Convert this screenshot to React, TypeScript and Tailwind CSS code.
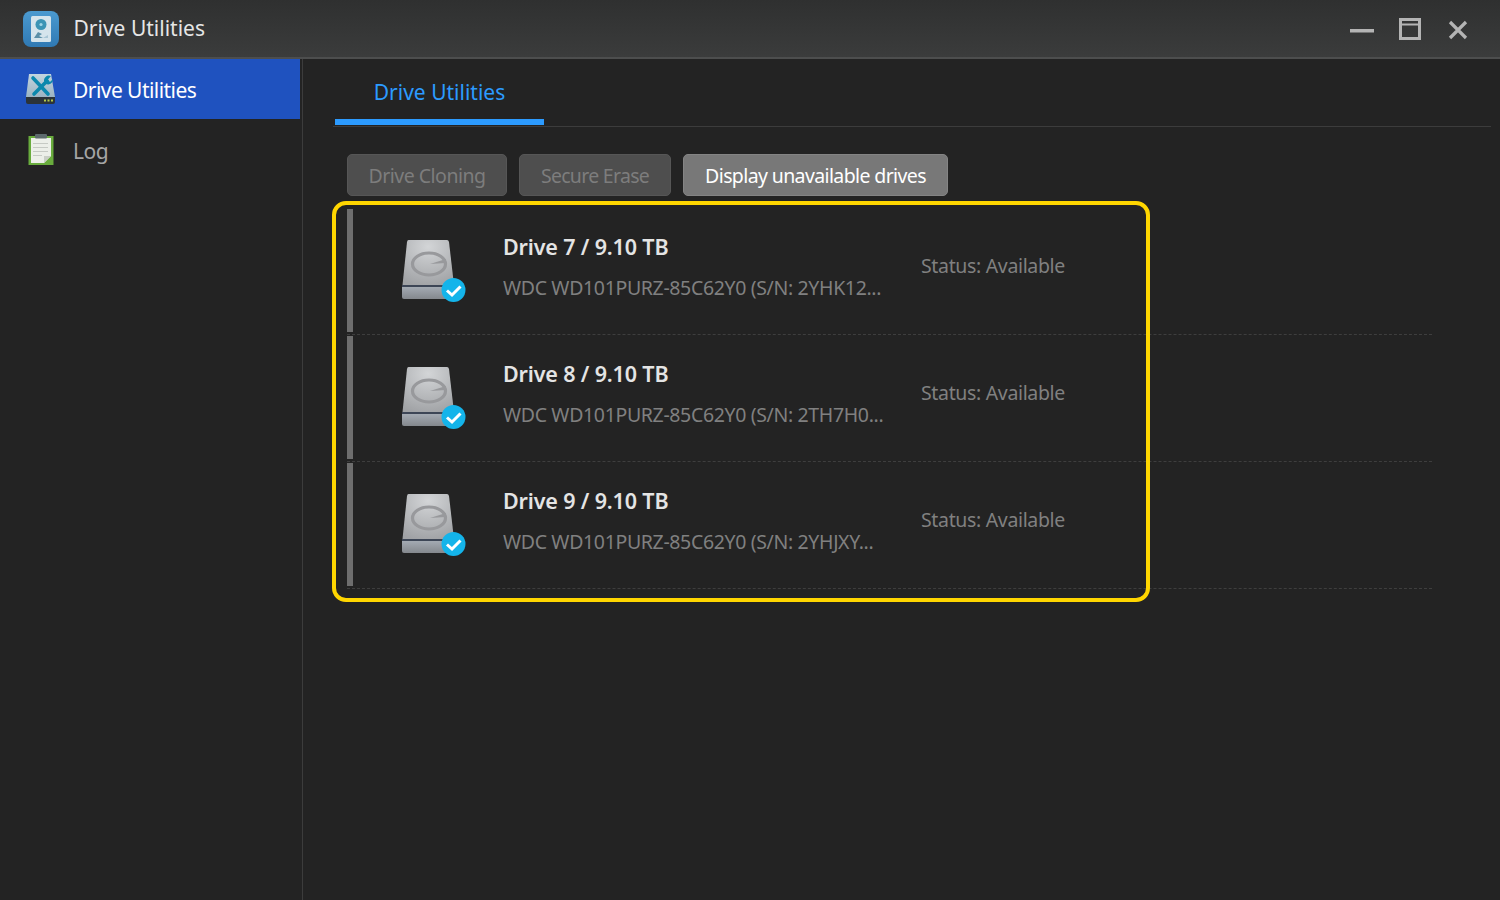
import React from 'react';

const drives = [
  { name: 'Drive 7 / 9.10 TB', model: 'WDC WD101PURZ-85C62Y0 (S/N: 2YHK12...' },
  { name: 'Drive 8 / 9.10 TB', model: 'WDC WD101PURZ-85C62Y0 (S/N: 2TH7H0...' },
  { name: 'Drive 9 / 9.10 TB', model: 'WDC WD101PURZ-85C62Y0 (S/N: 2YHJXY...' },
];

function AppLogo() {
  return (
    <svg width="36" height="36" viewBox="0 0 36 36" className="shrink-0">
      <defs>
        <linearGradient id="logoBg" x1="0" y1="0" x2="0" y2="1">
          <stop offset="0" stopColor="#4b9ad0" />
          <stop offset="1" stopColor="#2f79b4" />
        </linearGradient>
      </defs>
      <rect x="0" y="0" width="36" height="36" rx="8" fill="url(#logoBg)" />
      <rect x="8" y="5" width="20" height="26" rx="1.5" fill="#d5e4ec" />
      <circle cx="18" cy="13.5" r="5.5" fill="#3b94b5" />
      <circle cx="18" cy="13.5" r="1.6" fill="#9fd4e6" />
      <path d="M11 27 L15 21 L19 23 L16 25 L20 27 Z" fill="#5b8fa8" />
      <path d="M20 27 L25 24 L25 27 Z" fill="#a9c6d6" />
    </svg>
  );
}

function ToolsDriveIcon() {
  return (
    <svg width="32" height="32" viewBox="0 0 32 32" className="shrink-0">
      <defs>
        <linearGradient id="toolBg" x1="0" y1="0" x2="0" y2="1">
          <stop offset="0" stopColor="#c3d5df" />
          <stop offset="1" stopColor="#9bb4c2" />
        </linearGradient>
      </defs>
      <path d="M4 1 H26 L30 24 H1 Z" fill="url(#toolBg)" />
      <path d="M1 24 H30 V29 Q30 31 28 31 H3 Q1 31 1 29 Z" fill="#2b3338" />
      <rect x="19" y="26.5" width="2" height="2" fill="#b4c94a" />
      <rect x="22.5" y="26.5" width="2" height="2" fill="#b4c94a" />
      <rect x="26" y="26.5" width="2" height="2" fill="#b4c94a" />
      <path d="M8 5 L23 21" stroke="#0b88ad" strokeWidth="3.6" strokeLinecap="round" />
      <path d="M22 8 L9 21" stroke="#0b88ad" strokeWidth="3.6" strokeLinecap="round" />
      <path d="M19 8 A5 5 0 0 1 26 3 L23 6.5 L25 9 L28 6 A5 5 0 0 1 21 11 Z" fill="#0b88ad" />
    </svg>
  );
}

function LogIcon() {
  return (
    <svg width="26" height="31" viewBox="0 0 26 31" className="shrink-0">
      <rect x="0.5" y="2" width="25" height="29" fill="#69ac3d" />
      <rect x="3" y="4" width="20" height="25" fill="#ecefe9" />
      <path d="M23 22 L16 29 H23 Z" fill="#69ac3d" />
      <path d="M16 22 H23 L16 29 Z" fill="#c9cec6" />
      <rect x="7" y="0" width="12" height="4.5" rx="1" fill="#5d6a6d" />
      <rect x="5" y="9" width="15" height="1" fill="#c6cac4" />
      <rect x="5" y="13" width="15" height="1" fill="#c6cac4" />
      <rect x="5" y="17" width="15" height="1" fill="#c6cac4" />
      <rect x="5" y="21" width="9" height="1" fill="#c6cac4" />
    </svg>
  );
}

function DriveIcon({ id }: { id: number }) {
  return (
    <svg width="66" height="66" viewBox="0 0 66 66" className="shrink-0">
      <defs>
        <radialGradient id={`hd${id}`} cx="0.5" cy="0.15" r="0.9">
          <stop offset="0" stopColor="#d3d5d7" />
          <stop offset="1" stopColor="#a0a2a5" />
        </radialGradient>
        <linearGradient id={`hdb${id}`} x1="0" y1="0" x2="0" y2="1">
          <stop offset="0" stopColor="#a9b0b9" />
          <stop offset="1" stopColor="#84888d" />
        </linearGradient>
      </defs>
      <path d="M7.5 2 H46 Q47.5 2 48 4 L53 47 H1.5 L6 4 Q6.3 2 7.5 2 Z" fill={`url(#hd${id})`} />
      <path d="M1 47 H53 V59 Q53 61 51 61 H3 Q1 61 1 59 Z" fill={`url(#hdb${id})`} />
      <rect x="1" y="47" width="52" height="2" fill="#3d4656" />
      <ellipse cx="28" cy="26" rx="16.5" ry="11" fill="none" stroke="#98999c" strokeWidth="3.2" />
      <path d="M29 26 L45 21 L45 25 Z" fill="#98999c" />
      <circle cx="52.5" cy="52" r="12" fill="#14b4ea" />
      <path d="M46 52.5 L51 57 L59.5 48.5" fill="none" stroke="#ffffff" strokeWidth="3" />
    </svg>
  );
}

export default function App() {
  return (
    <div className="relative flex h-[900px] w-[1500px] flex-col overflow-hidden bg-[#232323] font-['Noto_Sans','Open_Sans',sans-serif]">
      <header className="flex h-[59px] shrink-0 items-center border-b-2 border-[#4d4e4e] bg-gradient-to-b from-[#2f3030] to-[#3b3c3c] pl-[23px] pr-[32px]">
        <AppLogo />
        <span className="ml-[14.5px] text-[21px] text-[#e6e6e6]">Drive Utilities</span>
        <div className="ml-auto flex items-center">
          <svg width="24" height="24" viewBox="0 0 24 24" className="mt-[4px]"><rect y="10" width="24" height="3.5" fill="#b4b4b4" /></svg>
          <svg width="22" height="22" viewBox="0 0 22 22" className="ml-[25px]"><path d="M1.5 1.5 H20.5 V20.5 H1.5 Z" fill="none" stroke="#b4b4b4" strokeWidth="3" /><rect x="3" y="5.5" width="16" height="2" fill="#b4b4b4" /></svg>
          <svg width="20" height="20" viewBox="0 0 20 20" className="ml-[27px] mt-[3px]"><path d="M2 2 L18 18 M18 2 L2 18" stroke="#b4b4b4" strokeWidth="3.2" /></svg>
        </div>
      </header>

      <div className="flex min-h-0 flex-1">
        <aside className="w-[303px] shrink-0 border-r border-[#3c3c3c] pr-[2px]">
          <div className="flex h-[60px] items-center bg-[#1f52bf] pl-[25px]">
            <ToolsDriveIcon />
            <span className="ml-[16px] mt-[4px] text-[21px] tracking-[-0.55px] text-white">Drive Utilities</span>
          </div>
          <div className="flex h-[60px] items-center pl-[28px]">
            <LogIcon />
            <span className="ml-[19px] mt-[5px] text-[21px] tracking-[-0.5px] text-[#a6a6a6]">Log</span>
          </div>
        </aside>

        <main className="min-w-0 flex-1 pl-[30px] pr-[9px]">
          <div className="flex h-[68px] items-end border-b border-[#3c3c3c]">
            <div className="mb-[1px] ml-[2px] flex h-[66px] w-[209px] items-center justify-center border-b-[6px] border-[#2c9bff] pt-[7px] text-[21px] text-[#2c9bff]">
              Drive Utilities
            </div>
          </div>

          <div className="ml-[14px] mt-[27px] flex gap-[12px]">
            <button className="h-[42px] w-[160px] rounded-[5px] border border-[#565656] bg-[#4e4e4e] pt-[2px] text-[19.5px] tracking-[-0.5px] text-[#7d7d7d]">Drive Cloning</button>
            <button className="h-[42px] w-[152px] rounded-[5px] border border-[#565656] bg-[#4e4e4e] pt-[2px] text-[19.5px] tracking-[-0.7px] text-[#7d7d7d]">Secure Erase</button>
            <button className="h-[42px] w-[265px] rounded-[5px] border border-[#848484] bg-[#787878] pt-[2px] text-[19.5px] tracking-[-0.62px] text-white">Display unavailable drives</button>
          </div>

          <div className="ml-[14px] mr-[59px] mt-[12px]">
            {drives.map((d, i) => (
              <div key={d.name} className="flex h-[127px] items-center border-b border-dashed border-[#3e3e3e]">
                <div className="mb-[2px] h-[123px] w-[6px] shrink-0 bg-[#6e6e6e]" />
                <div className="ml-[48px]"><DriveIcon id={i} /></div>
                <div className="mb-[9px] ml-[36px] w-[418px] shrink-0">
                  <div className="text-[21.5px] font-semibold leading-[30px] tracking-[-0.15px] text-[#e4e4e4]">{d.name}</div>
                  <div className="mt-[12px] truncate text-[19.5px] leading-[28px] tracking-[-0.35px] text-[#808080]">{d.model}</div>
                </div>
                <div className="mb-[11px] text-[19.5px] tracking-[-0.34px] text-[#808080]">Status: Available</div>
              </div>
            ))}
          </div>
        </main>
      </div>

      <div className="absolute left-[332px] top-[201px] h-[401px] w-[818px] rounded-[14px] border-[4px] border-[#ffd600]" />
    </div>
  );
}
